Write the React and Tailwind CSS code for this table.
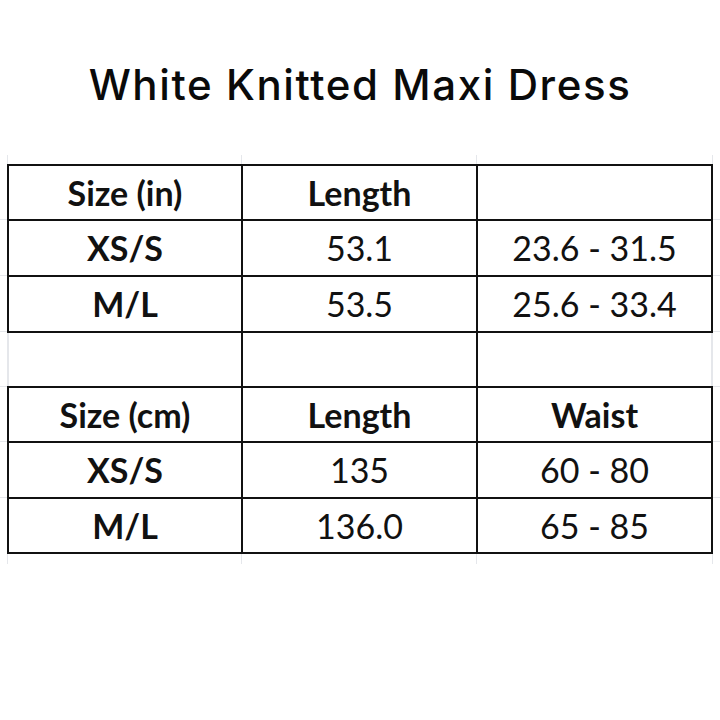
import React from "react";

const inchRows = [
  ["XS/S", "53.1", "23.6 - 31.5"],
  ["M/L", "53.5", "25.6 - 33.4"],
];

const cmRows = [
  ["XS/S", "135", "60 - 80"],
  ["M/L", "136.0", "65 - 85"],
];

function Cell({ children, bold, h }) {
  return (
    <div
      className={`bg-white flex items-center justify-center text-[34px] leading-none text-[#111] ${
        bold ? "font-bold" : "font-normal"
      } ${h}`}
    >
      {children}
    </div>
  );
}

function SizeTable({ head, rows, heights }) {
  return (
    <div className="grid grid-cols-[232px_233px_233px] gap-[2px] bg-[#111] p-[2px] w-[706px]">
      <Cell bold h={heights[0]}>{head[0]}</Cell>
      <Cell bold h={heights[0]}>{head[1]}</Cell>
      <Cell bold h={heights[0]}>{head[2]}</Cell>
      {rows.map((r, i) =>
        r.map((v, j) => (
          <Cell key={i + "-" + j} bold={j === 0} h={heights[i + 1]}>
            {v}
          </Cell>
        ))
      )}
    </div>
  );
}

// faint spreadsheet grid stubs poking out round the table
function Stubs({ h }) {
  return (
    <div className={`flex ml-[7px] w-[706px] ${h}`}>
      <div className="w-[234px] border-l border-gray-200" />
      <div className="w-[235px] border-l border-gray-200" />
      <div className="w-[237px] border-x border-gray-200" />
    </div>
  );
}

function SideStubs() {
  return (
    <div className="flex flex-col w-[7px]">
      <div className="h-[56px] border-b border-gray-200" />
      <div className="h-[56px] border-b border-gray-200" />
      <div className="h-[56px] border-b border-gray-200" />
      <div className="h-[55px] border-b border-gray-200" />
      <div className="h-[55px] border-b border-gray-200" />
      <div className="h-[56px] border-b border-gray-200" />
    </div>
  );
}

export default function App() {
  return (
    <div className="w-[720px] h-[720px] bg-white overflow-hidden" style={{ fontFamily: "Lato, 'Open Sans', sans-serif" }}>
      <h1
        className="mt-[61px] h-[48px] text-center text-[42px] leading-[48px] tracking-[1.6px] font-medium text-[#0a0a0a]"
        style={{ fontFamily: "Inter, 'Noto Sans', sans-serif" }}
      >
        White Knitted Maxi Dress
      </h1>

      <div className="mt-[46px]">
        <Stubs h="h-[9px]" />
        <div className="flex">
          <SideStubs />
          <div className="flex flex-col">
            <SizeTable
              head={["Size (in)", "Length", ""]}
              rows={inchRows}
              heights={["h-[53px]", "h-[54px]", "h-[54px]"]}
            />
            <div className="flex h-[53px] w-[706px]">
              <div className="w-[2px] bg-gray-200" />
              <div className="w-[232px]" />
              <div className="w-[2px] bg-[#111]" />
              <div className="w-[233px]" />
              <div className="w-[2px] bg-[#111]" />
              <div className="w-[233px]" />
              <div className="w-[2px] bg-gray-200" />
            </div>
            <SizeTable
              head={["Size (cm)", "Length", "Waist"]}
              rows={cmRows}
              heights={["h-[53px]", "h-[54px]", "h-[53px]"]}
            />
          </div>
          <SideStubs />
        </div>
        <Stubs h="h-[10px]" />
      </div>
    </div>
  );
}
